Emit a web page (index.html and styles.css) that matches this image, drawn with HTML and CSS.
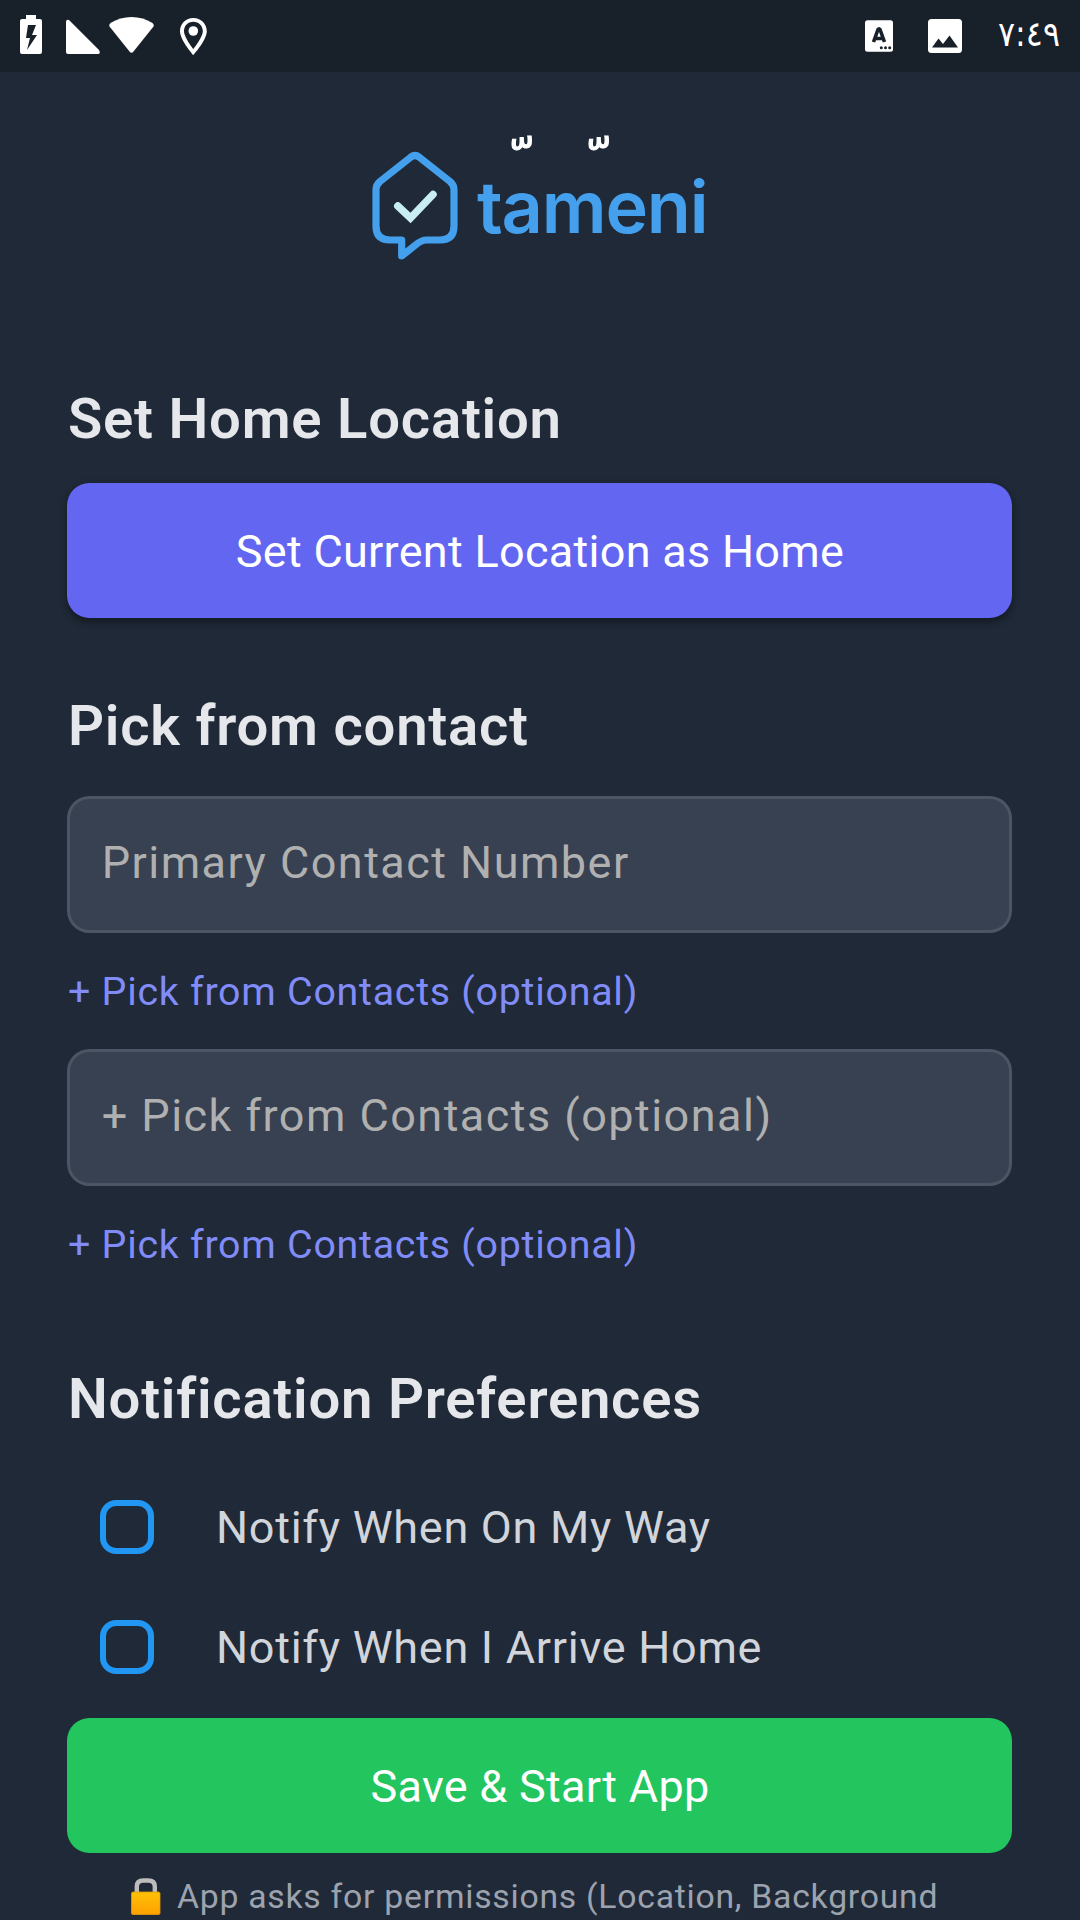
FILE: index.html
```html
<!DOCTYPE html>
<html lang="en">
<head>
<meta charset="utf-8">
<title>tameni</title>
<link rel="stylesheet" href="styles.css">
</head>
<body>
<div class="screen">
  <header class="status">
    <svg class="status-icons" width="220" height="72" viewBox="0 0 220 72" fill="#fff">
      <path fill-rule="evenodd" d="M26 15h10v4h4q2 0 2 2v31q0 2-2 2H22q-2 0-2-2V21q0-2 2-2h4zM28 25l-2 13h4l-3 12 10-15h-5l4-10z"/>
      <path d="M66 22q0-3 3-2l30 30q2 4-1 4H68q-2 0-2-2z"/>
      <path d="M109.500 26.500q-1-2 1-3.500 9.500-6 21-6t21 6q2 1.500 1 3.500L133.500 51.500q-2 2.500-4 0z"/>
      <path fill-rule="evenodd" d="M193.300 18c-7.500 0-13.300 5.600-13.300 13.200 0 9 13.300 23.800 13.300 23.800s13.500-14.800 13.500-23.800C206.800 23.600 200.800 18 193.300 18zm0 3.800c5.500 0 9.500 4 9.500 9.400 0 6-9.500 17.800-9.500 17.800s-9.300-11.800-9.300-17.800c0-5.400 3.800-9.400 9.300-9.400z"/>
      <circle cx="193.300" cy="31" r="4.800"/>
    </svg>
    <div class="status-right">
      <svg width="108" height="72" viewBox="860 0 108 72">
        <rect x="865" y="20.300" width="28" height="31.500" rx="2.500" fill="#fff"/>
        <path d="M873.500 42l4.500-12.500q1-1.500 2 0L884.500 42M875 38.500h8" fill="none" stroke="#182029" stroke-width="3.600"/>
        <g fill="#182029"><circle cx="881.300" cy="47.700" r="1.500"/><circle cx="885.500" cy="47.700" r="1.500"/><circle cx="889.700" cy="47.700" r="1.500"/></g>
        <rect x="928" y="19" width="34" height="34" rx="3.500" fill="#fff"/>
        <path d="M932 47.500l6.500-9 4.500 5.500 6.500-8.500 8.500 12z" fill="#182029"/>
      </svg>
      <span class="clock">٧:٤٩</span>
    </div>
  </header>

  <div class="brand">
    <svg width="380" height="150" viewBox="350 120 380 150">
      <path d="M411 157L380 181.500q-4 3.500-4 8v36.500q0 14 14 14h11.700v16L415.500 245q6-5 11-5H440q14 0 14-14v-36.500q0-4.500-4-8L419 157q-4-3-8 0z" fill="none" stroke="#449fec" stroke-width="7.200" stroke-linejoin="round"/>
      <path d="M397.800 206l12.700 12L433 194.500" fill="none" stroke="#c8eef3" stroke-width="7.500" stroke-linecap="round"/>
      <text class="wordmark" x="477" y="232.500" textLength="231.500">tameni</text>
      <text class="mark" transform="translate(506 181) scale(1.050 .850)">&#xa0;&#x651;</text>
      <text class="mark" transform="translate(583 181) scale(1.050 .850)">&#xa0;&#x651;</text>
    </svg>
  </div>

  <main class="form">
    <h2 class="t1">Set Home Location</h2>
    <button class="btn primary">Set Current Location as Home</button>
    <h2 class="t2">Pick from contact</h2>
    <div class="field">Primary Contact Number</div>
    <a class="link">+ Pick from Contacts (optional)</a>
    <div class="field second">+ Pick from Contacts (optional)</div>
    <a class="link">+ Pick from Contacts (optional)</a>
    <h2 class="t3">Notification Preferences</h2>
    <div class="options">
      <label class="option"><span class="box"></span><span>Notify When On My Way</span></label>
      <label class="option"><span class="box"></span><span>Notify When I Arrive Home</span></label>
    </div>
    <button class="btn save">Save &amp; Start App</button>
    <p class="note">
      <svg width="30" height="38" viewBox="0 0 30 38">
        <defs><linearGradient id="g" x1="0" y1="0" x2="0" y2="1"><stop offset="0" stop-color="#ffc107"/><stop offset="1" stop-color="#ffa000"/></linearGradient></defs>
        <path d="M5.800 16V9.500q0-6 6.500-6h5q6.500 0 6.500 6v7" fill="none" stroke="#bdbdbd" stroke-width="4.400"/>
        <rect x=".5" y="15" width="28.500" height="22.500" rx="1.500" fill="url(#g)" stroke="#e79a0b" stroke-width=".8"/>
      </svg>
      <span>App asks for permissions (Location, Background</span>
    </p>
  </main>
</div>
</body>
</html>
```
FILE: styles.css
```css
* { box-sizing: border-box; }
body { margin: 0; background: #1f2937; }
.screen {
  width: 1080px;
  height: 1920px;
  overflow: hidden;
  background: #1f2937;
  font-family: Roboto, sans-serif;
  display: flex;
  flex-direction: column;
}
.status {
  height: 72px;
  flex: none;
  background: #182029;
  display: flex;
  justify-content: space-between;
}
.status svg { display: block; }
.status-right { display: flex; width: 220px; }
.clock {
  color: #fff;
  font: 35px/68px "DejaVu Sans", sans-serif;
  margin-left: 30px;
  transform: scaleX(.91);
  transform-origin: 0 50%;
}
.brand {
  height: 314px;
  flex: none;
  padding: 48px 0 0 350px;
}
.brand svg { display: block; }
.wordmark { font: 600 72px Inter, sans-serif; fill: #449fec; }
.mark { font: 60px "DejaVu Sans", sans-serif; fill: #fff; stroke: #fff; stroke-width: 1.200px; }
.form {
  padding: 0 68px 0 67px;
  display: flex;
  flex-direction: column;
}
h2 {
  margin: 0;
  padding-left: 1px;
  font-size: 56.250px;
  line-height: 66px;
  font-weight: 600;
  letter-spacing: .760px;
  color: #e5e7eb;
  white-space: nowrap;
}
.btn {
  border: 0;
  border-radius: 22.500px;
  height: 135px;
  padding: 1px 0 0 1px;
  font: 400 45px/53px Roboto, sans-serif;
  letter-spacing: .280px;
  color: #fff;
}
.primary {
  margin-top: 30.500px;
  padding-top: 2px;
  background: #6366f1;
  box-shadow: 0 5px 6px rgba(0, 0, 0, .25), 0 2px 10px rgba(0, 0, 0, .15);
}
.t2 { margin-top: 75.500px; }
.field {
  margin-top: 37px;
  height: 137px;
  border: 3px solid #4b5563;
  border-radius: 22.500px;
  background: #374151;
  padding: 0 31.700px;
  font-size: 45px;
  line-height: 128px;
  letter-spacing: 1.460px;
  color: #b0b0b0;
  white-space: nowrap;
}
.link {
  margin-top: 36px;
  padding-left: 1px;
  font-size: 39.375px;
  line-height: 46px;
  letter-spacing: .740px;
  color: #818cf8;
  white-space: nowrap;
}
.second { margin-top: 34px; }
.t3 { margin-top: 98px; }
.options { margin-top: 35px; }
.option {
  height: 120px;
  display: flex;
  align-items: center;
  padding-left: 33px;
  gap: 62px;
  font-size: 45px;
  letter-spacing: .730px;
  color: #d1d5db;
  white-space: nowrap;
}
.box {
  width: 54px;
  height: 54px;
  border: 6px solid #2196f3;
  border-radius: 16px;
}
.save { margin-top: 11px; background: #22c55e; }
.note {
  margin: 24px 0 0;
  padding-left: 64px;
  display: flex;
  gap: 16px;
  font-size: 33.750px;
  line-height: 40px;
  letter-spacing: .740px;
  color: #9ca3af;
  white-space: nowrap;
}
```
